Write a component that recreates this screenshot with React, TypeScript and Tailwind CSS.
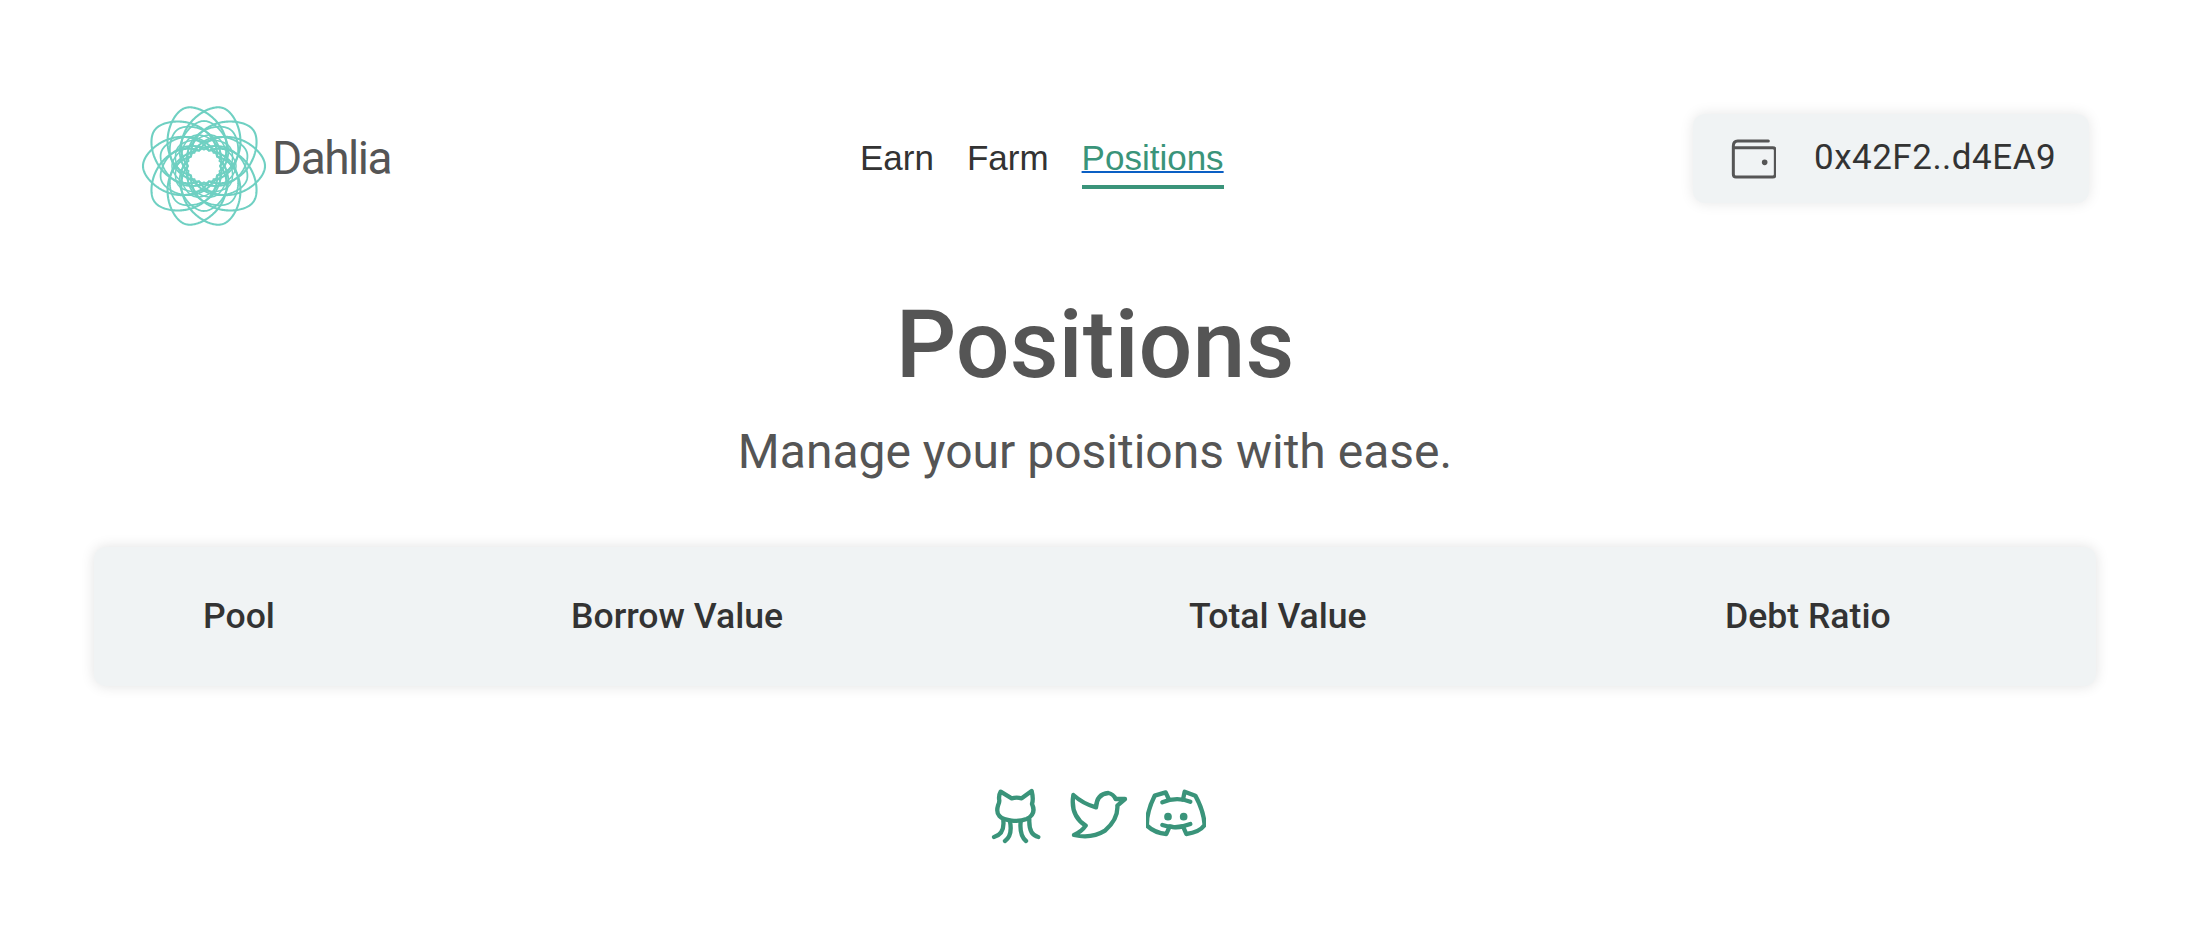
const green = "#3a947a";

function spiroPath(outer: number, power: number) {
  const pts: string[] = [];
  for (let deg = 0; deg < 1080; deg += 1) {
    const phase = ((deg % 216) + 216) % 216;
    const dist = Math.min(phase, 216 - phase) / 108;
    const e = 0.09;
    const u = Math.min(1, Math.sqrt(dist * dist + e * e) - e);
    const r = 15 + (outer - 15) * Math.pow(1 - u, power);
    const t = ((deg - 90) * Math.PI) / 180;
    pts.push(`${(r * Math.cos(t)).toFixed(2)} ${(r * Math.sin(t)).toFixed(2)}`);
  }
  return `M${pts.join("L")}Z`;
}

function Logo() {
  const outer = spiroPath(61, 1.45);
  const middle = spiroPath(45, 1.3);
  const inner = spiroPath(32, 1.2);
  return (
    <svg viewBox="-64 -64 128 128" className="w-[128px] h-[128px] shrink-0" fill="none" stroke="#6fd0c2" strokeWidth="2.1">
      <path d={outer} transform="rotate(18)" />
      <path d={outer} transform="rotate(54)" />
      <path d={middle} transform="rotate(0)" strokeWidth="1.8" />
      <path d={middle} transform="rotate(36)" strokeWidth="1.8" />
      <path d={inner} transform="rotate(18)" strokeWidth="1.5" />
      <path d={inner} transform="rotate(54)" strokeWidth="1.5" />
    </svg>
  );
}

function Wallet() {
  return (
    <svg viewBox="185 120 135 135" className="w-[45px] h-[45px] shrink-0" fill="none" stroke="#555555" strokeWidth="9" strokeLinecap="round" strokeLinejoin="round">
      <path d="M297 135H205Q192 135 192 150V235Q192 243 200 243H310Q318 243 318 235V163Q318 155 310 155H192" />
      <circle cx="286" cy="199" r="4" fill="#555555" />
    </svg>
  );
}

function Github() {
  return (
    <svg viewBox="48 51 180 180" className="w-[60px] h-[60px]" fill="none" stroke={green} strokeWidth="13" strokeLinecap="round" strokeLinejoin="round">
      <path d="M92 68L125 88Q140 84 155 88L185 66Q191 90 186 105Q200 135 170 150Q150 158 125 155Q72 150 84 110Q88 100 88 95Q85 80 92 68Z" />
      <path d="M100 155Q104 195 72 204M120 158Q128 200 105 216M152 158Q148 200 168 216M178 152Q176 198 205 204" />
    </svg>
  );
}

function Twitter() {
  return (
    <svg viewBox="297 51 180 180" className="w-[60px] h-[60px]" fill="none" stroke={green} strokeWidth="13" strokeLinecap="round" strokeLinejoin="round">
      <path d="M310 78Q340 105 378 115Q380 75 415 72Q430 75 437 90L465 90L442 110Q445 150 405 185Q365 210 312 198Q335 188 347 170Q300 140 310 78Z" />
    </svg>
  );
}

function Discord() {
  return (
    <svg viewBox="529 51 180 180" className="w-[60px] h-[60px]" fill="none" stroke={green} strokeWidth="13" strokeLinecap="round" strokeLinejoin="round">
      <path d="M598 92L588 70L555 80Q530 130 532 170Q555 192 590 195L600 172Q620 178 640 172L650 195Q690 190 705 168Q702 125 677 80L645 68L640 92" />
      <path d="M578 100Q620 82 662 98M578 168Q620 182 662 165" />
      <circle cx="595" cy="143" r="5" fill={green} />
      <circle cx="642" cy="143" r="5" fill={green} />
    </svg>
  );
}

export default function App() {
  return (
    <div className="w-[2202px] h-[928px] bg-white overflow-hidden pl-[94px] font-['Roboto',sans-serif] text-[#555555]">
      <div className="w-[2002px] pt-[102px]">
        <header className="flex items-start h-[128px] pl-[46px] pr-[7px]">
          <div className="flex items-center w-[720px]">
            <Logo />
            <span className="ml-[4px] mb-[17px] text-[46px] tracking-[-1.5px] leading-none">Dahlia</span>
          </div>
          <nav className="flex gap-[33px] mt-[32px] font-['Liberation_Sans',Arial,sans-serif] text-[35px] leading-[48px] text-[#333333]">
            <span>Earn</span>
            <span>Farm</span>
            <span className="border-b-4 h-[55px] border-[#3a947a]">
              <span className="text-[#3a947a] underline decoration-[#0a5fc4] decoration-2">Positions</span>
            </span>
          </nav>
          <div className="ml-auto mt-[12px] w-[396px] h-[89px] flex items-center pl-[38px] gap-[38px] bg-[#f0f3f4] rounded-xl shadow-[0_0_14px_rgba(0,0,0,0.1)]">
            <Wallet />
            <span className="text-[35px] text-[#333333] tracking-[0.5px]">0x42F2..d4EA9</span>
          </div>
        </header>
        <div className="flex flex-col items-center mt-[59px]">
          <h1 className="text-[95px] font-medium leading-[112px]">Positions</h1>
          <p className="text-[48px] leading-[60px] mt-[21px]">Manage your positions with ease.</p>
        </div>
        <div className="mt-[65px] h-[139px] grid grid-cols-[368px_618px_536px_1fr] items-center pl-[109px] bg-[#f0f3f4] rounded-xl shadow-[0_0_14px_rgba(0,0,0,0.12)] text-[35.6px] font-medium text-[#333333]">
          <span>Pool</span>
          <span>Borrow Value</span>
          <span>Total Value</span>
          <span>Debt Ratio</span>
        </div>
        <footer className="flex justify-center mt-[100px] pl-[2px]">
          <Github />
          <span className="ml-[23px]"><Twitter /></span>
          <span className="ml-[17px]"><Discord /></span>
        </footer>
      </div>
    </div>
  );
}
